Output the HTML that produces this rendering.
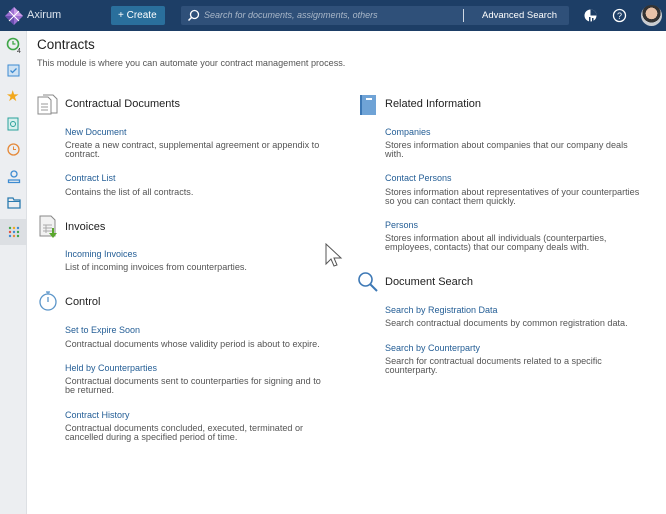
<!DOCTYPE html>
<html><head><meta charset="utf-8"><style>
*{margin:0;padding:0;box-sizing:border-box}
body{width:666px;height:514px;overflow:hidden;background:#fff;font-family:"Liberation Sans",sans-serif;position:relative}
.hdr{position:absolute;left:0;top:0;width:666px;height:31px;background:#1d3e66}
.side{position:absolute;left:0;top:31px;width:27px;height:483px;background:#eceef1;border-right:1px solid #dde0e4}
.t{position:absolute;white-space:nowrap}
.h{font-size:11px;color:#222}
.l{font-size:9px;color:#245e96}
.d{font-size:9.1px;color:#555;line-height:9px}
</style></head><body>
<div class="hdr">
 <svg style="position:absolute;left:4px;top:6px" width="20" height="20" viewBox="0 0 20 20"><path d="M10 1L19 10L10 19L1 10Z" fill="#9b6fd1"/><path d="M10 1L19 10L10 10Z" fill="#c99ce8"/><path d="M1 10L10 19L10 10Z" fill="#6b4fb0"/><path d="M5 5L15 15M15 5L5 15" stroke="#fff" stroke-width="1"/></svg>
 <div class="t" style="left:27px;top:9px;color:#dfe6ef;font-size:11px">Axirum</div>
 <div style="position:absolute;left:111px;top:6px;width:54px;height:19px;background:#2a6f9c;border-radius:2px"></div>
 <div class="t" style="left:118px;top:10px;color:#fff;font-size:10px;line-height:11px">+ Create</div>
 <div style="position:absolute;left:181px;top:6px;width:388px;height:19px;background:#2f5079;border-radius:2px"></div>
 <svg style="position:absolute;left:187px;top:9px" width="13" height="13"><circle cx="7.5" cy="5.5" r="4" fill="none" stroke="#fff" stroke-width="1.3"/><path d="M4.5 8.5L1.5 11.5" stroke="#fff" stroke-width="1.5"/></svg>
 <div class="t" style="left:204px;top:10px;color:#aab8c9;font-size:9px;font-style:italic">Search for documents, assignments, others</div>
 <div style="position:absolute;left:463px;top:9px;width:1px;height:13px;background:#cfd8e3"></div>
 <div class="t" style="left:482px;top:10px;color:#fff;font-size:9.5px">Advanced Search</div>
 <svg style="position:absolute;left:583px;top:8px" width="15" height="15"><circle cx="7.5" cy="7.5" r="6" fill="#fff"/><path d="M7.5 7.5L13.5 7.5A6 6 0 0 0 7.5 1.5Z" fill="#1d3e66"/><rect x="6" y="9" width="1.5" height="5" fill="#1d3e66"/><rect x="9" y="10" width="1.5" height="4" fill="#1d3e66"/></svg>
 <svg style="position:absolute;left:612px;top:8px" width="15" height="15"><circle cx="7.5" cy="7.5" r="6" fill="none" stroke="#fff" stroke-width="1.3"/><text x="7.5" y="11" font-size="9" fill="#fff" text-anchor="middle" font-family="Liberation Sans">?</text></svg>
 <div style="position:absolute;left:641px;top:5px;width:21px;height:21px;border-radius:50%;background:radial-gradient(circle at 50% 40%,#e8c2a8 0 35%,#333 36% 55%,#c9ccd0 56%)"></div>
</div>
<div class="side">
 <svg style="position:absolute;left:6px;top:6px" width="16" height="16"><circle cx="7" cy="7" r="5.5" fill="none" stroke="#3fa648" stroke-width="1.6"/><path d="M7 4v3h2.5" stroke="#3fa648" stroke-width="1.3" fill="none"/><text x="11" y="16" font-size="7" fill="#333">4</text></svg>
 <svg style="position:absolute;left:7px;top:33px" width="13" height="13"><rect x="1" y="1" width="11" height="11" fill="#cfe2f3" stroke="#3d8bd1"/><path d="M3.5 6.5l2 2 4-4" stroke="#3d8bd1" fill="none" stroke-width="1.3"/></svg>
 <div class="t" style="left:6px;top:56px;color:#f2a81d;font-size:15px">★</div>
 <svg style="position:absolute;left:7px;top:86px" width="13" height="14"><rect x="1" y="1" width="10" height="12" fill="#d7f0ee" stroke="#2aa19a"/><circle cx="6" cy="7" r="2.5" fill="none" stroke="#2aa19a"/></svg>
 <svg style="position:absolute;left:6px;top:111px" width="15" height="15"><circle cx="7.5" cy="7.5" r="5.5" fill="none" stroke="#e58a3b" stroke-width="1.3"/><path d="M7.5 4.5v3h2.5" stroke="#e58a3b" fill="none"/></svg>
 <svg style="position:absolute;left:7px;top:138px" width="14" height="15"><circle cx="7" cy="5" r="3" fill="none" stroke="#3d8bd1" stroke-width="1.3"/><path d="M1.5 13.5v-2.5h11v2.5z" fill="none" stroke="#3d8bd1" stroke-width="1.3"/></svg>
 <svg style="position:absolute;left:7px;top:165px" width="14" height="13"><path d="M1 2h5l1 2h6v8H1z" fill="none" stroke="#2b7bb0" stroke-width="1.3"/><path d="M1 5.5h12" stroke="#2b7bb0"/></svg>
 <div style="position:absolute;left:0;top:188px;width:27px;height:26px;background:#dcdfe3"></div>
 <svg style="position:absolute;left:8px;top:195px" width="12" height="12"><g><circle cx="2" cy="2" r="1.2" fill="#3fa648"/><circle cx="6" cy="2" r="1.2" fill="#f2a81d"/><circle cx="10" cy="2" r="1.2" fill="#3d8bd1"/><circle cx="2" cy="6" r="1.2" fill="#e5533d"/><circle cx="6" cy="6" r="1.2" fill="#3d8bd1"/><circle cx="10" cy="6" r="1.2" fill="#3fa648"/><circle cx="2" cy="10" r="1.2" fill="#3d8bd1"/><circle cx="6" cy="10" r="1.2" fill="#e58a3b"/><circle cx="10" cy="10" r="1.2" fill="#3fa648"/></g></svg>
</div>

<div class="t" style="left:37px;top:37px;font-size:13.5px;color:#222">Contracts</div>
<div class="t d" style="left:37px;top:59px">This module is where you can automate your contract management process.</div>

<svg style="position:absolute;left:37px;top:94px" width="22" height="22"><path d="M1 3h10l3 3v14H1z" fill="#fff" stroke="#888"/><path d="M6 1h10l4 4v14H14" fill="none" stroke="#888"/><path d="M4 10h7M4 13h7M4 16h7" stroke="#999"/></svg>
<div class="t h" style="left:65px;top:98px">Contractual Documents</div>
<div class="t l" style="left:65px;top:127px">New Document</div>
<div class="t d" style="left:65px;top:141px">Create a new contract, supplemental agreement or appendix to<br>contract.</div>
<div class="t l" style="left:65px;top:173px">Contract List</div>
<div class="t d" style="left:65px;top:188px">Contains the list of all contracts.</div>

<svg style="position:absolute;left:39px;top:215px" width="20" height="24"><path d="M1 1h11l4 4v16H1z" fill="#f2f2f2" stroke="#888"/><path d="M4 10h9M4 13h9M4 16h9M7 10v8" stroke="#aaa"/><path d="M13 13v5h-3l4 5 4-5h-3v-5z" fill="#5aa72d"/></svg>
<div class="t h" style="left:65px;top:221px">Invoices</div>
<div class="t l" style="left:65px;top:249px">Incoming Invoices</div>
<div class="t d" style="left:65px;top:263px">List of incoming invoices from counterparties.</div>

<svg style="position:absolute;left:38px;top:290px" width="20" height="22"><circle cx="10" cy="12" r="8" fill="none" stroke="#5b95c9" stroke-width="1.3"/><path d="M8 2h4M10 2v2M10 7v5" stroke="#5b95c9" stroke-width="1.3"/></svg>
<div class="t h" style="left:65px;top:296px">Control</div>
<div class="t l" style="left:65px;top:325px">Set to Expire Soon</div>
<div class="t d" style="left:65px;top:340px">Contractual documents whose validity period is about to expire.</div>
<div class="t l" style="left:65px;top:363px">Held by Counterparties</div>
<div class="t d" style="left:65px;top:377px">Contractual documents sent to counterparties for signing and to<br>be returned.</div>
<div class="t l" style="left:65px;top:410px">Contract History</div>
<div class="t d" style="left:65px;top:424px">Contractual documents concluded, executed, terminated or<br>cancelled during a specified period of time.</div>

<svg style="position:absolute;left:359px;top:94px" width="18" height="22"><rect x="1" y="1" width="16" height="20" fill="#6fa3d6"/><rect x="1" y="1" width="2" height="20" fill="#3d78b5"/><rect x="7" y="4" width="6" height="2" fill="#fff"/></svg>
<div class="t h" style="left:385px;top:98px">Related Information</div>
<div class="t l" style="left:385px;top:127px">Companies</div>
<div class="t d" style="left:385px;top:141px">Stores information about companies that our company deals<br>with.</div>
<div class="t l" style="left:385px;top:173px">Contact Persons</div>
<div class="t d" style="left:385px;top:188px">Stores information about representatives of your counterparties<br>so you can contact them quickly.</div>
<div class="t l" style="left:385px;top:220px">Persons</div>
<div class="t d" style="left:385px;top:234px">Stores information about all individuals (counterparties,<br>employees, contacts) that our company deals with.</div>

<svg style="position:absolute;left:357px;top:271px" width="22" height="22"><circle cx="8.5" cy="8.5" r="6.5" fill="none" stroke="#3d78b5" stroke-width="1.6"/><path d="M13.5 13.5L20 20" stroke="#3d78b5" stroke-width="2"/></svg>
<div class="t h" style="left:385px;top:276px">Document Search</div>
<div class="t l" style="left:385px;top:305px">Search by Registration Data</div>
<div class="t d" style="left:385px;top:319px">Search contractual documents by common registration data.</div>
<div class="t l" style="left:385px;top:343px">Search by Counterparty</div>
<div class="t d" style="left:385px;top:357px">Search for contractual documents related to a specific<br>counterparty.</div>

<svg style="position:absolute;left:325px;top:243px" width="18" height="26"><path d="M1 1v20l5-5 3 7 3-1-3-7h7z" fill="#fff" stroke="#555"/></svg>
</body></html>
